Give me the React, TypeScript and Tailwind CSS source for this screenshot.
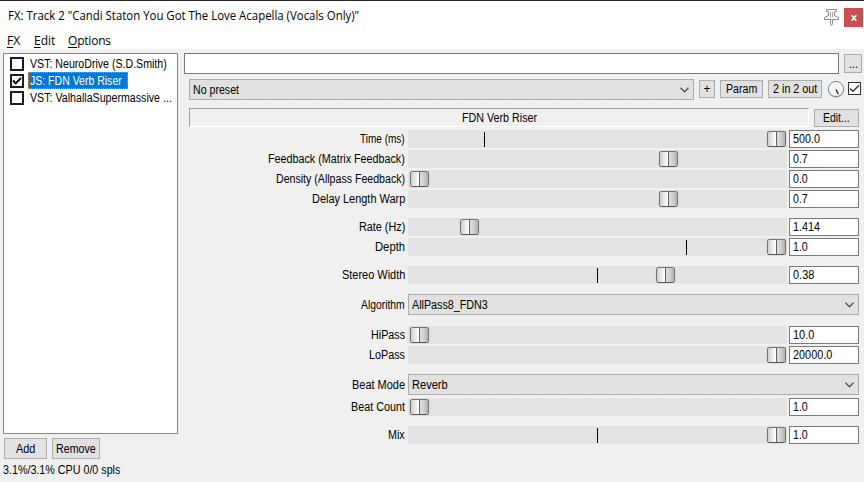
import { useLayoutEffect, useRef, useState } from "react";
import type { ReactNode } from "react";

const ui = "font-['Liberation_Sans',Arial,sans-serif] text-[12px] leading-[14px]";
const dots =
  "bg-[#e2e2e2] bg-[radial-gradient(circle,#dadada_0.6px,transparent_0.7px)] bg-[length:3px_3px]";

/* Text condensed or widened horizontally so that it fills the given width. */
function Fit({ w, children, className = "" }: { w: number; children: string; className?: string }) {
  const ref = useRef<HTMLSpanElement>(null);
  const [scale, setScale] = useState(1);
  useLayoutEffect(() => {
    if (ref.current) setScale(w / ref.current.offsetWidth);
  }, [w, children]);
  return (
    <span className={`inline-flex ${className}`} style={{ width: w }}>
      <span ref={ref} className="inline-block shrink-0 origin-left whitespace-pre" style={{ transform: `scaleX(${scale})` }}>
        {children}
      </span>
    </span>
  );
}

function Button({ className, children }: { className: string; children: ReactNode }) {
  return (
    <button className={`flex shrink-0 items-center justify-center border border-[#adadad] ${dots} ${className}`}>
      {children}
    </button>
  );
}

function Check({ on = false }: { on?: boolean }) {
  return (
    <span className="flex size-[14px] shrink-0 items-center justify-center border-2 border-[#1c1c1c] bg-white">
      {on && (
        <svg width="10" height="10" viewBox="0 0 10 10" fill="none" stroke="#000" strokeWidth="1.9">
          <path d="M1 4.5 L3.7 7.3 L9 2" />
        </svg>
      )}
    </span>
  );
}

function Combo({ className, text, w }: { className: string; text: string; w: number }) {
  return (
    <div className={`flex h-[21px] items-center justify-between border border-[#adadad] pr-[4px] pl-[3px] ${dots} ${className}`}>
      <Fit w={w}>{text}</Fit>
      <svg width="9" height="6" viewBox="0 0 9 6" fill="none" stroke="#505050" strokeWidth="1.3">
        <path d="M0.5 0.8 L4.5 4.8 L8.5 0.8" />
      </svg>
    </div>
  );
}

type Param = { label: string; w: number; thumb: string; tick?: string; value: string; vw: number; gap: string };

function Thumb({ at }: { at: string }) {
  return (
    <span
      className={`absolute top-px flex h-[16px] w-[19px] overflow-hidden rounded-[3px] border border-[#747474] border-b-[#5c5c5c] shadow-[0_0_1px_#999] ${at}`}
    >
      <span className="flex-1 bg-linear-to-r from-[#cfcfcf] via-[#e8e8e8] to-white" />
      <span className="w-px bg-[#606060]" />
      <span className="flex-1 bg-linear-to-r from-[#dedede] via-[#cfcfcf] to-[#b0b0b0]" />
    </span>
  );
}

function SliderRow({ p }: { p: Param }) {
  return (
    <div className={`flex h-[18px] items-center ${p.gap}`}>
      <div className="flex w-[221px] shrink-0 justify-end pr-[3px]">
        <Fit w={p.w}>{p.label}</Fit>
      </div>
      <div className="relative h-[18px] w-[379px] shrink-0 bg-[#e4e4e4] bg-[radial-gradient(circle,#e0e0e0_0.7px,transparent_0.8px)] bg-[length:3px_3px]">
        {p.tick && <span className={`absolute top-[2px] h-[15px] w-px bg-black ${p.tick}`} />}
        <Thumb at={p.thumb} />
      </div>
      <div className="ml-[2px] flex h-[18px] w-[70px] items-center border border-[#7a7a7a] bg-white pl-[3px]">
        <Fit w={p.vw}>{p.value}</Fit>
      </div>
    </div>
  );
}

function ComboRow({ label, w, text, tw, gap }: { label: string; w: number; text: string; tw: number; gap: string }) {
  return (
    <div className={`flex h-[21px] items-center ${gap}`}>
      <div className="flex w-[221px] shrink-0 justify-end pr-[3px]">
        <Fit w={w}>{label}</Fit>
      </div>
      <Combo className="w-[451px]" text={text} w={tw} />
    </div>
  );
}

const first: Param[] = [
  { label: "Time (ms)", w: 45, thumb: "left-[359px]", tick: "left-[76px]", value: "500.0", vw: 27, gap: "mt-[3px]" },
  { label: "Feedback (Matrix Feedback)", w: 137, thumb: "left-[251px]", value: "0.7", vw: 15, gap: "mt-[2px]" },
  { label: "Density (Allpass Feedback)", w: 129, thumb: "left-[2px]", value: "0.0", vw: 15, gap: "mt-[2px]" },
  { label: "Delay Length Warp", w: 93, thumb: "left-[251px]", value: "0.7", vw: 15, gap: "mt-[2px]" },
  { label: "Rate (Hz)", w: 46, thumb: "left-[52px]", value: "1.414", vw: 27, gap: "mt-[10px]" },
  { label: "Depth", w: 30, thumb: "left-[359px]", tick: "left-[278px]", value: "1.0", vw: 15, gap: "mt-[2px]" },
  { label: "Stereo Width", w: 63, thumb: "left-[248px]", tick: "left-[189px]", value: "0.38", vw: 21, gap: "mt-[10px]" },
];
const pass: Param[] = [
  { label: "HiPass", w: 34, thumb: "left-[2px]", value: "10.0", vw: 21, gap: "mt-[11px]" },
  { label: "LoPass", w: 36, thumb: "left-[359px]", value: "20000.0", vw: 39, gap: "mt-[2px]" },
];
const last: Param[] = [
  { label: "Beat Count", w: 54, thumb: "left-[2px]", value: "1.0", vw: 15, gap: "mt-[3px]" },
  { label: "Mix", w: 17, thumb: "left-[359px]", tick: "left-[189px]", value: "1.0", vw: 15, gap: "mt-[10px]" },
];

const plugins = [
  { name: "VST: NeuroDrive (S.D.Smith)", w: 137, on: false, sel: false },
  { name: "JS: FDN Verb Riser", w: 92, on: true, sel: true },
  { name: "VST: ValhallaSupermassive ...", w: 142, on: false, sel: false },
];

export default function App() {
  return (
    <div className={`flex h-[482px] w-[864px] flex-col overflow-hidden bg-[#f0f0f0] text-black ${ui}`}>
      <header className="flex h-[49px] shrink-0 flex-col border-t border-[#2b2629] bg-white font-['Open_Sans','Noto_Sans',sans-serif]">
        <div className="flex h-[30px] items-center justify-between pr-px pl-[8px]">
          <Fit w={351} className="text-[12px]">{'FX: Track 2 "Candi Staton You Got The Love Acapella (Vocals Only)"'}</Fit>
          <div className="flex items-center pt-[3px]">
            <svg width="15" height="17" viewBox="0 0 15 17" fill="#fff" stroke="#8c8c8c" strokeWidth="1" className="mr-[5px]">
              <path d="M2.5 0.5 H12.5 V2.5 H10.5 V6.5 L14.5 8.5 V10.5 H0.5 V8.5 L4.5 6.5 V2.5 H2.5 Z" />
              <path d="M6.5 3 V8 M8.5 3 V8" strokeWidth="0.8" />
              <path d="M6.5 10.5 V15 L7.5 16.5 L8.5 15 V10.5" />
            </svg>
            <span className="flex h-[19px] w-[19px] items-center justify-center bg-[#c75050]">
              <svg width="6" height="6" viewBox="0 0 6 6" stroke="#fff" strokeWidth="1.7">
                <path d="M0.7 0.3 L5.3 5.7 M5.3 0.3 L0.7 5.7" />
              </svg>
            </span>
          </div>
        </div>
        <nav className="flex pl-[7px] pt-[3px] leading-[14px]">
          <span className="w-[27px]"><u className="underline-offset-2">F</u>X</span>
          <span className="w-[34px]"><u className="underline-offset-2">E</u>dit</span>
          <span className="tracking-[-0.2px]"><u className="underline-offset-2">O</u>ptions</span>
        </nav>
      </header>

      <div className="flex flex-1">
        <aside className="w-[184px] shrink-0 pt-[4px] pl-[3px]">
          <ul className="h-[381px] w-[175px] border border-[#828790] bg-white pt-px">
            {plugins.map((p) => (
              <li key={p.name} className="flex h-[17px] items-center pl-[6px]">
                <Check on={p.on} />
                <span
                  className={
                    p.sel
                      ? "ml-[4px] flex h-[17px] w-[100px] items-center border border-dotted border-[#ff8728] bg-[#0078d7] pl-px text-white"
                      : "ml-[4px] flex h-[17px] items-center pl-[2px]"
                  }
                >
                  <Fit w={p.w}>{p.name}</Fit>
                </span>
              </li>
            ))}
          </ul>
          <div className="mt-[4px] flex gap-[5px] pl-px">
            <Button className="h-[21px] w-[43px]"><Fit w={19}>Add</Fit></Button>
            <Button className="h-[21px] w-[48px]"><Fit w={40}>Remove</Fit></Button>
          </div>
          <div className="mt-[4px]"><Fit w={117}>3.1%/3.1% CPU 0/0 spls</Fit></div>
        </aside>

        <main className="flex-1 pt-[4px]">
          <div className="flex gap-[5px]">
            <div className="h-[21px] w-[655px] border border-[#7a7a7a] bg-white" />
            <Button className="mt-px h-[19px] w-[18px]"><Fit w={9}>...</Fit></Button>
          </div>
          <div className="mt-[5px] flex h-[21px] pl-[5px]">
            <Combo className="w-[505px]" text="No preset" w={46} />
            <Button className="mt-px ml-[5px] h-[18px] w-[16px]">+</Button>
            <Button className="mt-px ml-[5px] h-[18px] w-[43px]"><Fit w={31}>Param</Fit></Button>
            <Button className="mt-px ml-[5px] h-[18px] w-[54px]"><Fit w={44}>2 in 2 out</Fit></Button>
            <svg width="18" height="20" viewBox="0 0 18 20" className="ml-[5px]">
              <circle cx="9" cy="11" r="7.8" fill="#c6c6c6" />
              <circle cx="9" cy="10" r="7.6" fill="#f4f4f4" stroke="#777" strokeWidth="0.9" />
              <path d="M9 10.5 L11.3 15" stroke="#222" strokeWidth="1.4" />
            </svg>
            <span className="mt-[3px] ml-[3px] flex size-[13px] items-center justify-center border border-[#333] bg-white">
              <svg width="11" height="11" viewBox="0 0 11 11" fill="none" stroke="#333" strokeWidth="1.4">
                <path d="M1 5.5 L4 8.3 L10 2.3" />
              </svg>
            </span>
          </div>

          <section className="mt-[8px] pl-[5px]">
            <div className="flex h-[19px] gap-[5px]">
              <div className="flex w-[620px] items-center justify-center border border-t-[#a0a0a0] border-r-white border-b-white border-l-[#a0a0a0]">
                <Fit w={75}>FDN Verb Riser</Fit>
              </div>
              <Button className="mt-px h-[18px] w-[45px]"><Fit w={27}>Edit...</Fit></Button>
            </div>
            <div className="-ml-[2px]">
              {first.map((p) => <SliderRow key={p.label} p={p} />)}
              <ComboRow label="Algorithm" w={44} text="AllPass8_FDN3" tw={76} gap="mt-[10px]" />
              {pass.map((p) => <SliderRow key={p.label} p={p} />)}
              <ComboRow label="Beat Mode" w={53} text="Reverb" tw={36} gap="mt-[10px]" />
              {last.map((p) => <SliderRow key={p.label} p={p} />)}
            </div>
          </section>
        </main>
      </div>
    </div>
  );
}
